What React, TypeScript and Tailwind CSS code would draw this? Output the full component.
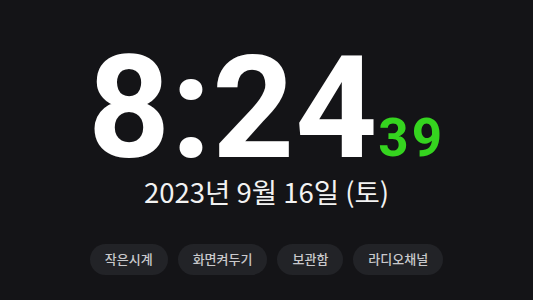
import React from "react";

const links = ["작은시계", "화면켜두기", "보관함", "라디오채널"];

const App = () => {
  return (
    <div
      className="w-[533px] h-[300px] bg-[#141417] flex flex-col items-center overflow-hidden"
      style={{ fontFamily: '"Noto Sans CJK KR", "Noto Sans", sans-serif' }}
    >
      <div className="mt-[33px] flex items-end leading-none font-['Roboto',sans-serif]">
        <span className="text-[143px] font-bold text-white leading-[150px] tracking-[1px]">8:24</span>
        <span className="text-[53px] font-bold text-[#35d41f] leading-none mb-[18px] ml-[0px] tracking-[3px]">39</span>
      </div>
      <div className="mt-[-5px] text-[27.5px] text-[#f2f2f2] leading-none">2023년 9월 16일 (토)</div>
      <div className="mt-[38px] flex gap-[10px]">
        {links.map((l) => (
          <div
            key={l}
            className="h-[31px] px-[15px] rounded-full bg-[#222327] text-[#c9c9cc] text-[13px] font-medium flex items-center"
          >
            {l}
          </div>
        ))}
      </div>
    </div>
  );
};

export default App;
